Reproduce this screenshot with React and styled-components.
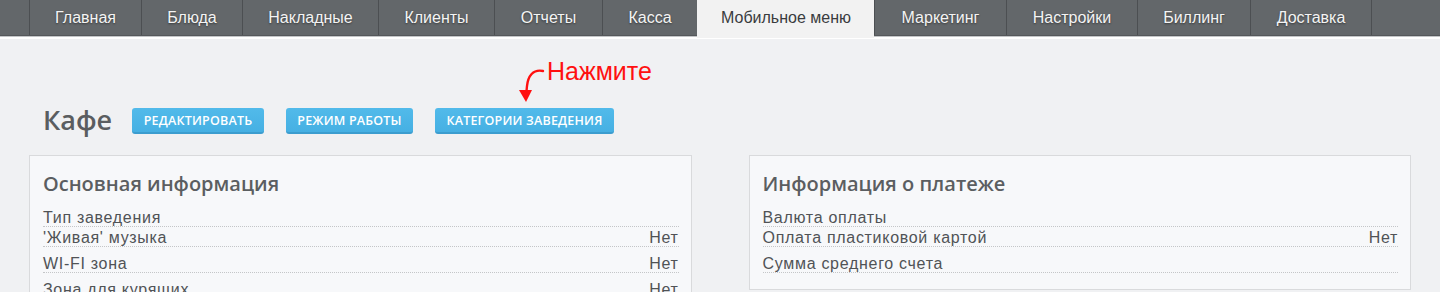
import styled, { createGlobalStyle } from 'styled-components';

const tabs = [
  { title: 'Главная', width: 112 },
  { title: 'Блюда', width: 101 },
  { title: 'Накладные', width: 136 },
  { title: 'Клиенты', width: 116 },
  { title: 'Отчеты', width: 108 },
  { title: 'Касса', width: 95 },
  { title: 'Мобильное меню', width: 177, active: true },
  { title: 'Маркетинг', width: 132 },
  { title: 'Настройки', width: 131 },
  { title: 'Биллинг', width: 113 },
  { title: 'Доставка', width: 122 },
];

const mainInfo = [
  { label: 'Тип заведения' },
  { label: "'Живая' музыка", value: 'Нет' },
  { label: 'WI-FI зона', value: 'Нет' },
  { label: 'Зона для курящих', value: 'Нет' },
];

const paymentInfo = [
  { label: 'Валюта оплаты' },
  { label: 'Оплата пластиковой картой', value: 'Нет' },
  { label: 'Сумма среднего счета' },
];

const GlobalStyle = createGlobalStyle`
  html, body {
    margin: 0;
    padding: 0;
    background: #f0f1f3;
  }
  body {
    font-family: "Liberation Sans", Arial, sans-serif;
    overflow: hidden;
  }
  * {
    box-sizing: border-box;
  }
`;

const Page = styled.div`
  width: 1440px;
  height: 292px;
  overflow: hidden;
  background: #f0f1f3;
`;

const Nav = styled.nav`
  display: flex;
  height: 36px;
  padding-left: 29px;
  background: #63676a;
  border-bottom: 1px solid #55585b;
  box-shadow: 0 1px 0 #c4c6c8, 0 3px 0 #ffffff;
`;

const Tab = styled.div`
  display: flex;
  align-items: center;
  justify-content: center;
  flex: none;
  width: ${({ width }) => width}px;
  height: ${({ active }) => (active ? '38px' : '35px')};
  padding-bottom: ${({ active }) => (active ? '3px' : '0')};
  font-size: 16px;
  white-space: nowrap;
  color: ${({ active }) => (active ? '#3a3c3e' : '#f4f4f4')};
  text-shadow: ${({ active }) => (active ? 'none' : '0 1px 2px rgba(0,0,0,0.45)')};
  background: ${({ active }) => (active ? '#f2f2f2' : 'transparent')};
  border-left: 1px solid ${({ active }) => (active ? '#f2f2f2' : '#4c4f52')};
  position: relative;
  z-index: ${({ active }) => (active ? 1 : 0)};

  &:last-child {
    border-right: 1px solid #4c4f52;
  }
`;

const Content = styled.main`
  padding: 0 29px;
`;

const HeadRow = styled.div`
  position: relative;
  display: flex;
  align-items: center;
  gap: 22px;
  height: 36px;
  margin-top: 67px;
  padding-left: 14px;
`;

const Title = styled.h1`
  margin: 0 0 4px;
  width: 67px;
  font-family: "Open Sans", sans-serif;
  font-size: 27px;
  font-weight: 600;
  color: #5a5d60;
`;

const Button = styled.button`
  flex: none;
  width: ${({ w }) => w}px;
  height: 26px;
  padding: 1px 0 0;
  border: none;
  border-bottom: 2px solid #3c9dcf;
  border-radius: 3px;
  background: linear-gradient(#52baea, #46b0e3);
  color: #ffffff;
  font-family: "Open Sans", sans-serif;
  font-size: 12.5px;
  font-weight: 600;
  letter-spacing: 0.2px;
  white-space: nowrap;
`;

const Hint = styled.div`
  position: absolute;
  left: 482px;
  top: -45px;
  display: flex;
  align-items: flex-start;
  pointer-events: none;
`;

const HintText = styled.span`
  margin-left: 2px;
  font-family: "Liberation Sans", Arial, sans-serif;
  font-size: 25px;
  line-height: 26px;
  color: #ff1010;
`;

const Columns = styled.div`
  display: grid;
  grid-template-columns: 1fr 1fr;
  column-gap: 57px;
  align-items: start;
  margin-top: 16px;
`;

const Panel = styled.section`
  background: #f7f8fa;
  border: 1px solid #d9dadc;
  padding: 16px 12px 16px 13px;
`;

const PanelTitle = styled.h2`
  margin: 0 0 11px;
  font-family: "Open Sans", sans-serif;
  font-size: 20px;
  font-weight: 600;
  line-height: 24px;
  color: #5b5e61;
`;

const Row = styled.div`
  display: flex;
  justify-content: space-between;
  height: 20px;
  padding-top: 3px;
  margin-bottom: ${({ hasValue }) => (hasValue ? '6px' : '0')};
  font-size: 16px;
  line-height: 16px;
  letter-spacing: 0.7px;
  color: #505356;
  border-bottom: 1px dotted #c4c6c8;
`;

function Arrow() {
  return (
    <svg width="34" height="46" viewBox="0 0 34 46">
      <path
        d="M32 13 C22 11 17 18 16 28 L15 38"
        fill="none"
        stroke="#ff1010"
        strokeWidth="2.4"
        strokeLinecap="round"
      />
      <path d="M8 32 L15 44 L21 32 Z" fill="#ff1010" />
    </svg>
  );
}

function InfoPanel({ title, rows }) {
  return (
    <Panel>
      <PanelTitle>{title}</PanelTitle>
      {rows.map((r) => (
        <Row key={r.label} hasValue={!!r.value}>
          <span>{r.label}</span>
          {r.value && <span>{r.value}</span>}
        </Row>
      ))}
    </Panel>
  );
}

export default function App() {
  return (
    <Page>
      <GlobalStyle />
      <Nav>
        {tabs.map((t) => (
          <Tab key={t.title} active={t.active} width={t.width}>
            {t.title}
          </Tab>
        ))}
      </Nav>
      <Content>
        <HeadRow>
          <Title>Кафе</Title>
          <Button w={132}>РЕДАКТИРОВАТЬ</Button>
          <Button w={127}>РЕЖИМ РАБОТЫ</Button>
          <Button w={179}>КАТЕГОРИИ ЗАВЕДЕНИЯ</Button>
          <Hint>
            <Arrow />
            <HintText>Нажмите</HintText>
          </Hint>
        </HeadRow>
        <Columns>
          <InfoPanel title="Основная информация" rows={mainInfo} />
          <InfoPanel title="Информация о платеже" rows={paymentInfo} />
        </Columns>
      </Content>
    </Page>
  );
}
